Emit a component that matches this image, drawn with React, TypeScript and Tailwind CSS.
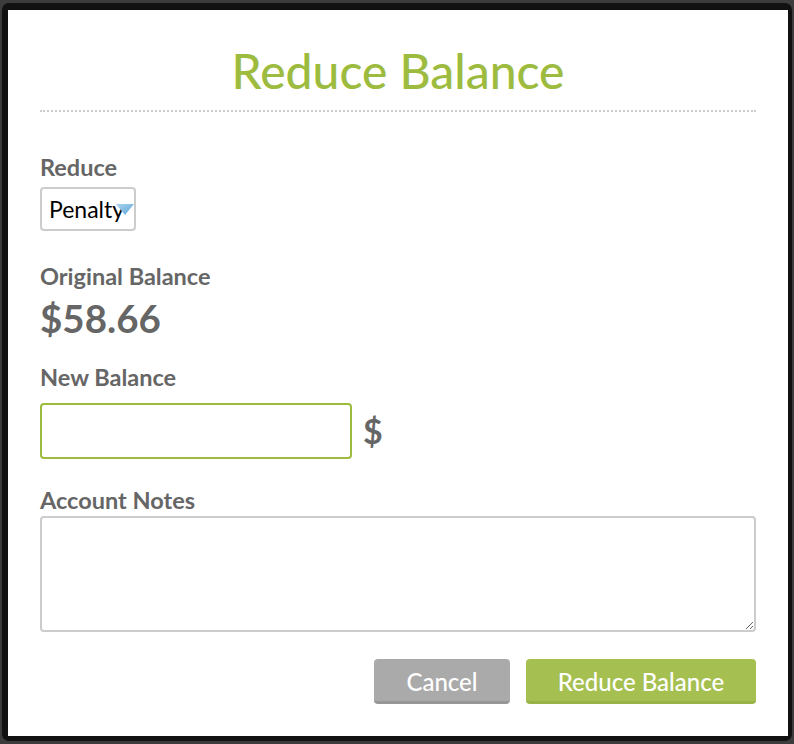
import React from 'react';

const font = { fontFamily: 'Lato, "Noto Sans", sans-serif' };

function Label({ children, className = '' }: { children: React.ReactNode; className?: string }) {
  return (
    <div className={`text-[23.5px] leading-[28px] font-bold text-[#666666] ${className}`}>{children}</div>
  );
}

function PenaltySelect() {
  return (
    <div className="relative mt-[6px] flex h-[44px] w-[96px] items-center rounded-[4px] border-2 border-[#cccccc] bg-white pl-[7px]">
      <span className="text-[23px] leading-none text-black">Penalty</span>
      <svg
        className="absolute left-[74px] top-[15px]"
        width="18"
        height="12"
        viewBox="0 0 18 12"
      >
        <defs>
          <linearGradient id="tri" x1="0" y1="0" x2="1" y2="1">
            <stop offset="0" stopColor="#a9d3f0" />
            <stop offset="1" stopColor="#5fa6d8" />
          </linearGradient>
        </defs>
        <polygon points="0,0 18,0 9,11" fill="url(#tri)" />
      </svg>
    </div>
  );
}

export default function App() {
  return (
    <div className="h-[744px] w-[794px] bg-[#3c3c3c] pt-[3px] pl-[2px] pr-[2px] pb-[3px]" style={font}>
      <div className="h-full w-full rounded-[7px] bg-[#111111] pt-[7px] pl-[6px] pr-[4px] pb-[5px]">
        <div className="flex h-full w-full flex-col bg-white px-[32px]">
          <h1 className="mt-[32px] text-center text-[48px] leading-[58px] font-medium text-[#9dbc3f]">
            Reduce Balance
          </h1>
          <div className="mt-[10px] border-t-2 border-dotted border-[#cccccc]" />

          <Label className="mt-[41px]">Reduce</Label>
          <PenaltySelect />

          <Label className="mt-[31px]">Original Balance</Label>
          <div className="mt-[5px] text-[38.5px] leading-[46px] font-bold text-[#666666]">$58.66</div>

          <Label className="mt-[22px]">New Balance</Label>
          <div className="mt-[12px] flex items-center gap-[11px]">
            <input
              type="text"
              className="h-[56px] w-[312px] rounded-[4px] border-2 border-[#9dbc3f] bg-white px-3 text-[22px] outline-none"
            />
            <span className="text-[34px] leading-none font-bold text-[#666666]">$</span>
          </div>

          <Label className="mt-[27px]">Account Notes</Label>
          <textarea className="mt-[2px] h-[116px] w-full rounded-[4px] border-2 border-[#cccccc] bg-white p-2 text-[18px] outline-none" />

          <div className="mt-[27px] flex justify-end gap-[16px]">
            <button className="h-[45px] w-[136px] rounded-[4px] border-b-[3px] border-[#979797] bg-[#aaaaaa] pt-[3px] text-[24px] leading-none font-medium text-white">
              Cancel
            </button>
            <button className="h-[45px] w-[230px] rounded-[4px] border-b-[3px] border-[#97b347] bg-[#a5c051] pt-[3px] text-[24px] leading-none font-medium text-white">
              Reduce Balance
            </button>
          </div>
        </div>
      </div>
    </div>
  );
}
